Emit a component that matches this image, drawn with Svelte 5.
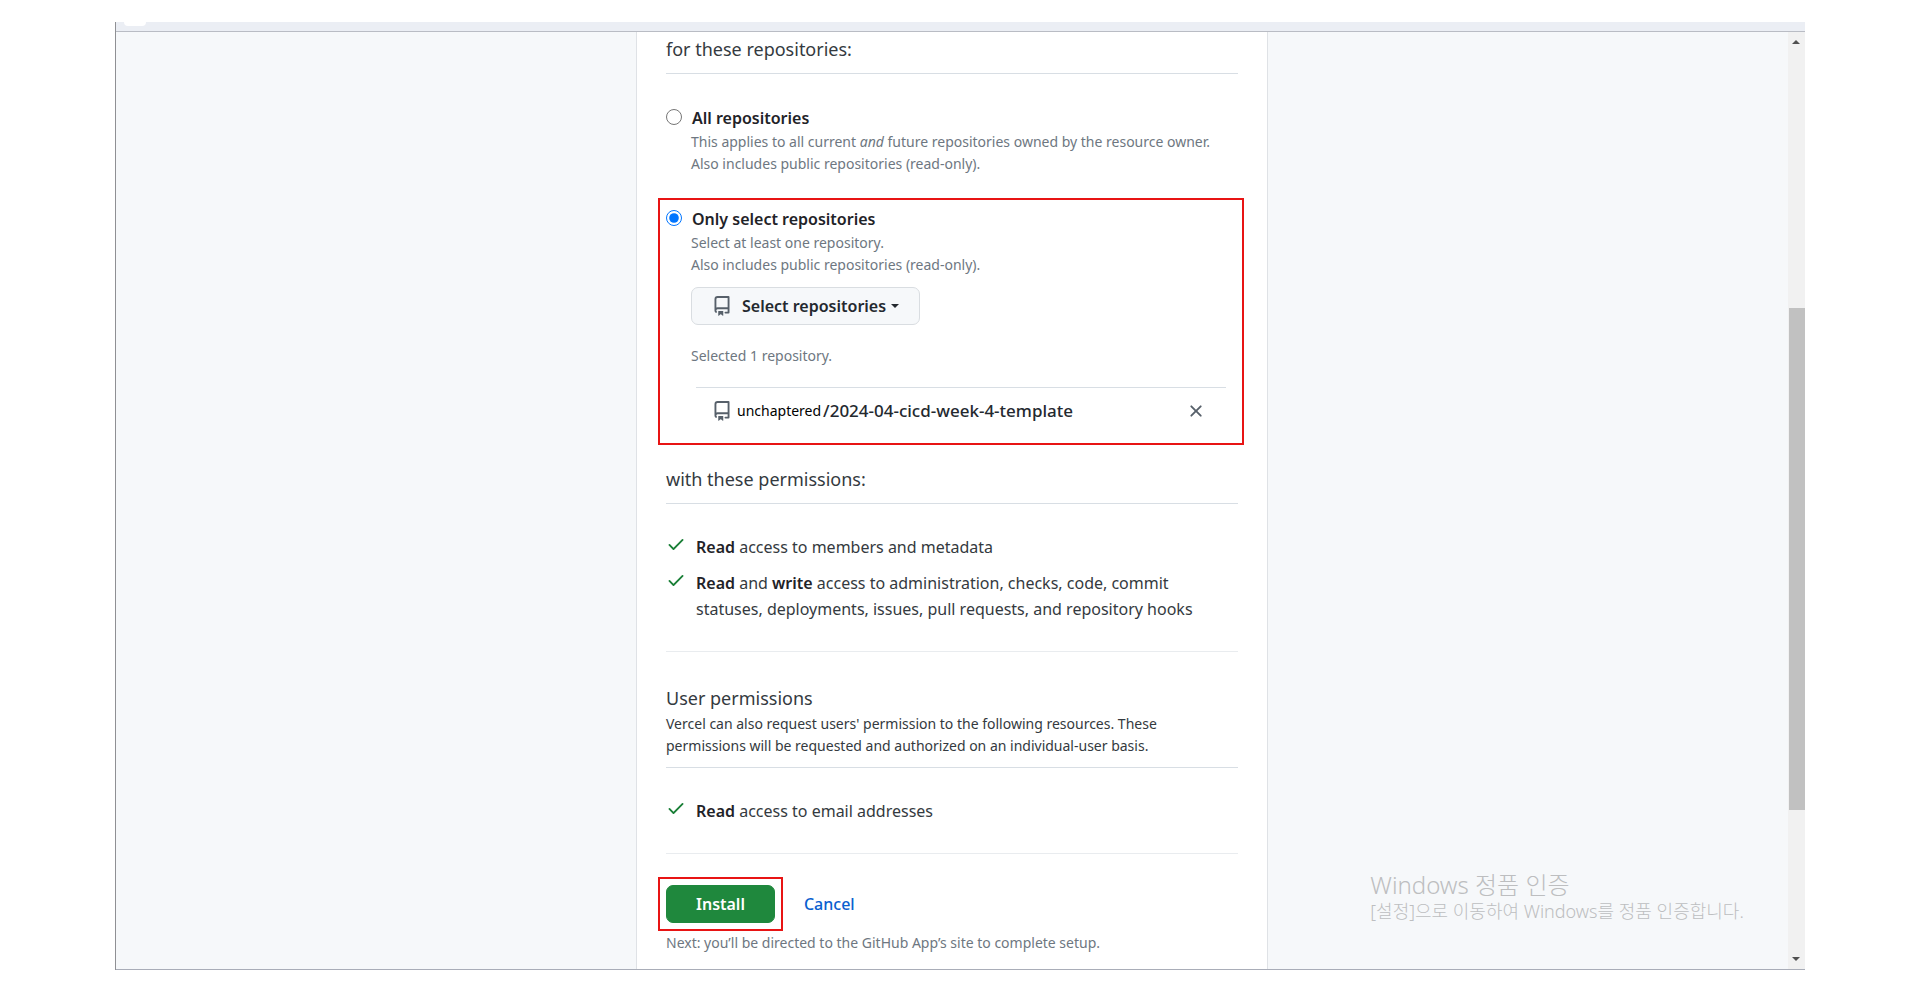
<script lang="ts">
	let scope = 'selected';
	let repositories = [{ owner: 'unchaptered', name: '2024-04-cicd-week-4-template' }];

	function removeRepository(name: string) {
		repositories = repositories.filter((repo) => repo.name !== name);
	}
</script>

{#snippet repoIcon()}
	<svg class="repo-icon" viewBox="0 0 16 16" aria-hidden="true">
		<path d="M2 2.5A2.5 2.5 0 0 1 4.5 0h8.75a.75.75 0 0 1 .75.75v12.5a.75.75 0 0 1-.75.75h-2.5a.75.75 0 0 1 0-1.5h1.75v-2h-8a1 1 0 0 0-.714 1.7.75.75 0 1 1-1.072 1.05A2.495 2.495 0 0 1 2 11.5Zm10.5-1h-8a1 1 0 0 0-1 1v6.708A2.486 2.486 0 0 1 4.5 9h8ZM5 12.25a.25.25 0 0 1 .25-.25h3.5a.25.25 0 0 1 .25.25v3.25a.25.25 0 0 1-.4.2l-1.45-1.087a.249.249 0 0 0-.3 0L5.4 15.7a.25.25 0 0 1-.4-.2Z" />
	</svg>
{/snippet}

{#snippet checkIcon()}
	<svg class="check-icon" viewBox="0 0 16 16" aria-hidden="true">
		<path d="M13.78 4.22a.75.75 0 0 1 0 1.06l-7.25 7.25a.75.75 0 0 1-1.06 0L2.22 9.28a.751.751 0 0 1 .018-1.042.751.751 0 0 1 1.042-.018L6 10.94l6.72-6.72a.75.75 0 0 1 1.06 0Z" />
	</svg>
{/snippet}

<div class="window">
	<div class="toolbar"><span class="tab"></span></div>
	<div class="viewport">
		<main class="page">
			<form class="card" on:submit|preventDefault>
				<h3>for these repositories:</h3>

				<div class="option">
					<input id="all" type="radio" name="scope" value="all" bind:group={scope}>
					<div>
						<label for="all">All repositories</label>
						<p class="note">
							This applies to all current <em>and</em> future repositories owned by the resource owner.<br>
							Also includes public repositories (read-only).
						</p>
					</div>
				</div>

				<div class="marked select">
					<div class="option">
						<input id="selected" type="radio" name="scope" value="selected" bind:group={scope}>
						<div>
							<label for="selected">Only select repositories</label>
							<p class="note">
								Select at least one repository.<br>
								Also includes public repositories (read-only).
							</p>
							<button type="button" class="btn">
								{@render repoIcon()}
								Select repositories
								<span class="caret"></span>
							</button>
							<p class="note count">Selected {repositories.length} repository.</p>
							<ul class="repos">
								{#each repositories as repo}
									<li>
										{@render repoIcon()}
										<span class="owner">{repo.owner}</span>
										<span class="name">/{repo.name}</span>
										<button type="button" class="remove" aria-label="Remove" on:click={() => removeRepository(repo.name)}>
											<svg viewBox="0 0 16 16" aria-hidden="true">
												<path d="M3.72 3.72a.75.75 0 0 1 1.06 0L8 6.94l3.22-3.22a.749.749 0 0 1 1.275.326.749.749 0 0 1-.215.734L9.06 8l3.22 3.22a.749.749 0 0 1-.326 1.275.749.749 0 0 1-.734-.215L8 9.06l-3.22 3.22a.751.751 0 0 1-1.042-.018.751.751 0 0 1-.018-1.042L6.94 8 3.72 4.78a.75.75 0 0 1 0-1.06Z" />
											</svg>
										</button>
									</li>
								{/each}
							</ul>
						</div>
					</div>
				</div>

				<h3>with these permissions:</h3>
				<ul class="permissions">
					<li>
						{@render checkIcon()}
						<p><strong>Read</strong> access to members and metadata</p>
					</li>
					<li>
						{@render checkIcon()}
						<p><strong>Read</strong> and <strong>write</strong> access to administration, checks, code, commit statuses, deployments, issues, pull requests, and repository hooks</p>
					</li>
				</ul>

				<div class="user-heading">
					<h4>User permissions</h4>
					<p>
						Vercel can also request users' permission to the following resources. These permissions will be requested and authorized on an individual-user basis.
					</p>
				</div>
				<ul class="permissions">
					<li>
						{@render checkIcon()}
						<p><strong>Read</strong> access to email addresses</p>
					</li>
				</ul>

				<div class="actions">
					<div class="marked">
						<button type="submit" class="btn primary">Install</button>
					</div>
					<a href="#cancel">Cancel</a>
				</div>
				<p class="note next">Next: you’ll be directed to the GitHub App’s site to complete setup.</p>
			</form>
		</main>
		<div class="scrollbar" aria-hidden="true">
			<span class="arrow up"></span>
			<span class="thumb"></span>
			<span class="arrow down"></span>
		</div>
		<aside class="activation">
			<p class="title">Windows 정품 인증</p>
			<p>[설정]으로 이동하여 Windows를 정품 인증합니다.</p>
		</aside>
	</div>
</div>

<style>
	:global(body) {
		background: #fff;
	}

	h3, h4, p, ul {
		margin: 0;
		padding: 0;
		font-weight: 400;
		list-style: none;
	}

	.window {
		width: 88%;
		margin: 22px auto;
		box-sizing: border-box;
		border-left: 1px solid #8f9094;
		font-family: 'Noto Sans', 'Noto Sans CJK KR', sans-serif;
		font-size: 16px;
		line-height: 26px;
		color: #343a40;
	}

	.toolbar {
		height: 9px;
		background: #ebeef4;
		border-bottom: 1px solid #b9bcc4;
	}

	.tab {
		display: block;
		width: 22px;
		height: 4px;
		margin-left: 8px;
		background: #fff;
		border-radius: 0 0 11px 11px;
	}

	.viewport {
		position: relative;
		display: flex;
		background: #f6f8fa;
		border-bottom: 1px solid #a9adb8;
	}

	.page {
		flex: 1;
		display: flex;
		justify-content: center;
	}

	.card {
		width: 632px;
		max-width: 100%;
		box-sizing: border-box;
		padding: 5px 29px 15px;
		background: #fff;
		border: solid #dfe2e6;
		border-width: 0 1px;
	}

	h3 {
		padding-bottom: 12px;
		border-bottom: 1px solid #d8dee4;
		font-size: 18px;
		line-height: 24px;
	}

	h4 {
		font-size: 18px;
		line-height: 24px;
	}

	.option {
		display: grid;
		grid-template-columns: 16px 1fr;
		column-gap: 9px;
	}

	h3 + .option {
		margin-top: 31px;
	}

	input {
		width: 16px;
		height: 16px;
		margin: 4px 0;
		accent-color: #0075ff;
	}

	label, strong {
		font-weight: 600;
		color: #1f2328;
	}

	label {
		display: block;
		padding-left: 1px;
	}

	.note {
		font-size: 14px;
		line-height: 22px;
		color: #6e7781;
	}

	.marked {
		border: 2px solid #e81414;
	}

	.select {
		margin: 23px -6px 22px -8px;
		padding: 6px 6px 19px;
	}

	.btn {
		display: inline-flex;
		align-items: center;
		height: 38px;
		padding: 0 20px;
		border: 1px solid #d9dde1;
		border-radius: 7px;
		background: #f6f8fa;
		font: inherit;
		font-weight: 600;
		color: #24292f;
		cursor: pointer;
	}

	.select .btn {
		margin-top: 11px;
	}

	.btn .repo-icon {
		margin-right: 10px;
	}

	.repo-icon {
		width: 20px;
		height: 20px;
		fill: #57606a;
	}

	.caret {
		margin-left: 5px;
		border: 4px solid transparent;
		border-top-color: currentColor;
		border-bottom: 0;
	}

	.count {
		margin: 20px 0;
	}

	.repos {
		margin: 0 10px 0 5px;
		border-top: 1px solid #d8dee4;
	}

	.repos li {
		display: flex;
		align-items: center;
		padding: 10px 20px 0 16px;
	}

	.owner {
		margin: 0 2px 0 5px;
		font-size: 14px;
		color: #000;
	}

	.name {
		font-size: 17px;
		font-weight: 500;
		color: #24292f;
	}

	.remove {
		display: flex;
		margin-left: auto;
		padding: 0;
		border: 0;
		background: none;
		cursor: pointer;
	}

	.remove svg {
		width: 20px;
		height: 20px;
		fill: #57606a;
	}

	.permissions {
		display: grid;
		gap: 10px;
		padding: 30px 0 29px;
		border-bottom: 1px solid #e9ecef;
	}

	.permissions li {
		display: grid;
		grid-template-columns: 20px 1fr;
		column-gap: 10px;
	}

	.check-icon {
		width: 20px;
		height: 20px;
		fill: #1a7f37;
	}

	.user-heading {
		padding: 34px 0 10px;
		border-bottom: 1px solid #d8dee4;
	}

	.user-heading p {
		margin-top: 3px;
		font-size: 14px;
		line-height: 22px;
	}

	.actions {
		display: flex;
		align-items: center;
		gap: 21px;
		margin: 23px -8px 0;
	}

	.actions .marked {
		display: flex;
		padding: 6px;
	}

	.btn.primary {
		padding: 0 29px;
		border-color: #1f883d;
		background: #1f883d;
		color: #fff;
	}

	.next {
		margin-top: 1px;
	}

	a {
		font-weight: 500;
		color: #0960cf;
		text-decoration: none;
	}

	.scrollbar {
		display: grid;
		grid-template-rows: 20px 256fr 502fr 139fr 20px;
		width: 17px;
		background: #f1f1f1;
	}

	.arrow {
		grid-row: 1;
		place-self: center;
		border: 4px solid transparent;
	}

	.up {
		border-top: 0;
		border-bottom-color: #505050;
	}

	.down {
		grid-row: 5;
		border-bottom: 0;
		border-top-color: #505050;
	}

	.thumb {
		grid-row: 3;
		margin-left: 1px;
		background: #c1c1c1;
	}

	/* system notice floats above the page */
	.activation {
		position: absolute;
		right: 61px;
		bottom: 45px;
		font-size: 18px;
		color: #bdbec0;
	}

	.activation p {
		font-weight: 300;
	}

	.activation .title {
		font-size: 24px;
	}
</style>
